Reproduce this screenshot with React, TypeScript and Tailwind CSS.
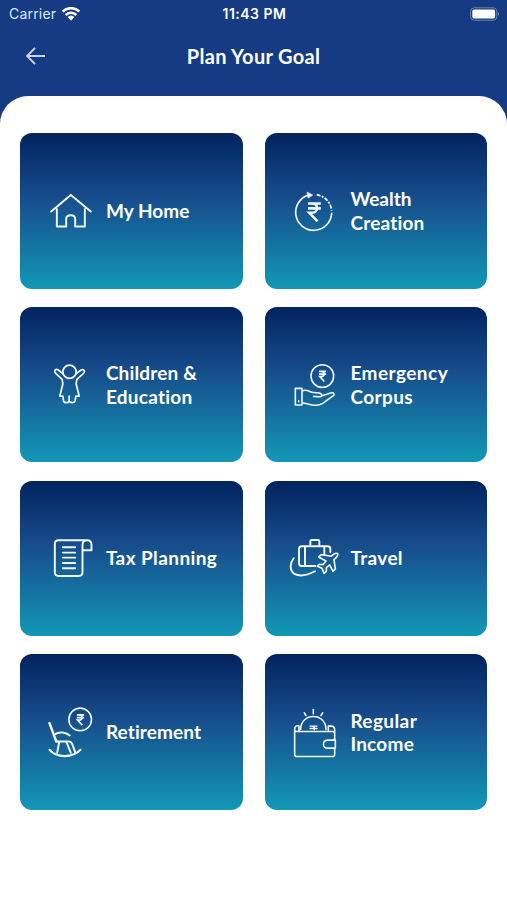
import type { ReactNode } from "react";

const Rupee = ({ x, y, s, w }: { x: number; y: number; s: number; w: number }) => (
  <path
    transform={`translate(${x} ${y}) scale(${s})`}
    strokeWidth={w}
    strokeLinecap="butt"
    strokeLinejoin="miter"
    d="M0 2H40M0 17H40M4 2H12C34 2 34 31 12 31H4L30 58"
  />
);

const Icon = ({ viewBox, children }: { viewBox: string; children: ReactNode }) => (
  <svg
    viewBox={viewBox}
    className="h-[60px] w-14 shrink-0 text-[#f0f8ff]"
    fill="none"
    stroke="currentColor"
    strokeWidth={5.8}
    strokeLinecap="round"
    strokeLinejoin="round"
  >
    {children}
  </svg>
);

const goals: { lines: { text: string; track: string }[]; icon: ReactNode }[] = [
  {
    lines: [{ text: "My Home", track: "tracking-[0.05px]" }],
    icon: (
      <Icon viewBox="12.5 2.25 168 180">
        <path d="M34 94L93 44L153 94M51 86V139H79V116C79 101 106 101 106 116V139H135V86" />
      </Icon>
    ),
  },
  {
    lines: [
      { text: "Wealth", track: "tracking-[0px]" },
      { text: "Creation", track: "tracking-[0.2px]" },
    ],
    icon: (
      <Icon viewBox="12 2.25 168 180">
        <path strokeWidth={5} d="M72 44A54 54 0 1 0 140 99" />
        <path strokeWidth={5} strokeLinecap="butt" strokeDasharray="12 4 6 4" d="M95 43A54 54 0 0 1 140 91" />
        <path fill="currentColor" strokeWidth={2} d="M67 36L83 44L70 53Z" />
        <Rupee x={69} y={68} s={0.96} w={8} />
      </Icon>
    ),
  },
  {
    lines: [
      { text: "Children &", track: "tracking-[0.15px]" },
      { text: "Education", track: "tracking-[0.25px]" },
    ],
    icon: (
      <Icon viewBox="12.5 13.8 168 180">
        <g strokeWidth={5.2}>
          <circle cx="89" cy="64" r="20" />
          <path d="M70 70L54 58C47 55 41 62 47 68L67 87L69 101L60 137H69L71 151C73 159 86 159 88 151V137V151C91 159 103 159 106 151L108 137H118L109 101L111 87L132 68C137 61 130 55 124 59L108 70" />
        </g>
      </Icon>
    ),
  },
  {
    lines: [
      { text: "Emergency", track: "tracking-[0.45px]" },
      { text: "Corpus", track: "tracking-[0.4px]" },
    ],
    icon: (
      <Icon viewBox="12 13.8 168 180">
        <g strokeWidth={4.8}>
          <circle cx="112" cy="77" r="34" />
          <Rupee x={102} y={62} s={0.54} w={9} />
          <path d="M31 114H51V164H31ZM41 151V154M52 121C64 117 69 121 79 125C91 129 99 125 108 130C114 136 109 140 100 139L86 138M111 136L137 128C147 125 151 132 143 137L113 159C101 167 91 166 78 163L53 157" />
        </g>
      </Icon>
    ),
  },
  {
    lines: [{ text: "Tax Planning", track: "tracking-[0.4px]" }],
    icon: (
      <Icon viewBox="12.5 10.2 168 180">
        <path d="M144 47H56Q45 47 45 58V143Q45 154 56 154H117Q128 154 128 143V61Q128 47 142 47Q155 47 155 61V77H130" />
        <path d="M69 68H106M69 84H106M69 99H106M69 115H106M69 131H106" />
      </Icon>
    ),
  },
  {
    lines: [{ text: "Travel", track: "tracking-[0.35px]" }],
    icon: (
      <Icon viewBox="27 10.2 168 180">
        <path d="M106 124H65Q57 124 57 116V73Q57 65 65 65H143Q151 65 151 73V83M91 64V50Q91 46 95 46H114Q118 46 118 50V64M75 66V123M133 66V88" />
        <path d="M41 101C29 116 28 137 43 148C61 157 84 151 105 140" />
        <path strokeWidth={5} d="M173 87C167 84 160 88 154 95L124 90L116 97L138 109L129 120L118 119L112 125L126 131L132 146L139 140L139 129L149 121L159 140L166 133L162 105C170 98 176 92 173 87Z" />
      </Icon>
    ),
  },
  {
    lines: [{ text: "Retirement", track: "tracking-[0.1px]" }],
    icon: (
      <Icon viewBox="12.5 21.6 168 180">
        <circle cx="121" cy="74" r="34" strokeWidth={4.8} />
        <Rupee x={111} y={59} s={0.55} w={9} />
        <path strokeWidth={7.5} d="M29 85L49 139" />
        <path d="M46 118C58 109 78 113 90 122M49 140H88Q94 140 97 147L106 172M58 142L52 174M80 142L93 174" />
        <path strokeWidth={6.5} d="M29 165C50 190 98 190 122 165" />
      </Icon>
    ),
  },
  {
    lines: [
      { text: "Regular", track: "tracking-[0.4px]" },
      { text: "Income", track: "tracking-[0.25px]" },
    ],
    icon: (
      <Icon viewBox="12 21.6 168 180">
        <g strokeWidth={4.8}>
          <path d="M149 136V116Q149 110 143 110H36Q29 110 29 104V178Q29 185 36 185H143Q149 185 149 179V160M151 136H129C111 136 111 160 129 160H151ZM29 104Q29 92 40 93M137 94Q149 93 149 105V116" />
          <path d="M42 108V94M47 104C47 52 123 52 123 104M130 106V94H137" />
          <path d="M85 44V57M58 54L63 62M113 54L108 62" />
          <path strokeWidth={4} d="M75 94H96M75 101H96M80 94Q92 96 88 105" />
        </g>
      </Icon>
    ),
  },
];

export default function App() {
  return (
    <div className="flex h-[900px] w-[507px] flex-col overflow-hidden bg-[#173b82] font-['Lato',sans-serif] text-white">
      <div className="grid h-7 shrink-0 grid-cols-3 items-center pb-px pl-[9px] pr-[7px] font-['Inter',sans-serif] text-[14px]">
        <div className="flex items-center gap-[6px]">
          <span className="tracking-[0.2px] text-[#dce7f8]">Carrier</span>
          <svg viewBox="0 0 54 42" className="h-[14px] w-[18px]" fill="none" stroke="currentColor" strokeWidth="7.5">
            <path d="M2 14C16 0 38 0 52 14M11 24C20 15 34 15 43 24" />
            <path d="M17 30Q27 21 37 30L27 41Z" fill="currentColor" stroke="none" />
          </svg>
        </div>
        <span className="whitespace-nowrap text-center font-semibold tracking-[0.5px]">11:43 PM</span>
        <svg viewBox="0 0 30 14" className="h-[14px] w-[30px] justify-self-end">
          <rect x="0.6" y="0.8" width="26.2" height="12.4" rx="3.6" fill="none" stroke="#6d84b6" />
          <rect x="2.3" y="2.5" width="22.8" height="9" rx="2" fill="white" />
          <path d="M28 5Q30 7 28 9Z" fill="#8296c2" />
        </svg>
      </div>

      <div className="grid h-[68px] shrink-0 grid-cols-[1fr_auto_1fr] items-center pb-3">
        <svg viewBox="0 0 20 18" className="ml-[26px] h-[18px] w-5" fill="none" stroke="#c9d5ec" strokeWidth="1.8">
          <path d="M19 9H1M9 1L1 9L9 17" />
        </svg>
        <h1 className="pb-px text-[20px] font-bold leading-6 tracking-[0.3px]">Plan Your Goal</h1>
      </div>

      <main className="flex-1 rounded-t-[28px] bg-white pl-[20.4px] pr-[19.6px] pt-[37px]">
        <div className="grid grid-cols-2 gap-x-[22px] gap-y-[18.3px]">
          {goals.map((goal) => (
            <button
              key={goal.lines[0].text}
              className="flex h-[155.5px] items-center rounded-xl bg-[linear-gradient(180deg,#02235f_0%,#174b8b_40%,#1397b6_100%)] pl-6 text-left"
            >
              {goal.icon}
              <span
                className={`ml-[5.5px] flex flex-col text-[19px] font-bold leading-[23.6px] ${
                  goal.lines.length === 1 ? "pb-[0.5px]" : ""
                }`}
              >
                {goal.lines.map((line) => (
                  <span key={line.text} className={`whitespace-nowrap ${line.track}`}>
                    {line.text}
                  </span>
                ))}
              </span>
            </button>
          ))}
        </div>
      </main>
    </div>
  );
}
